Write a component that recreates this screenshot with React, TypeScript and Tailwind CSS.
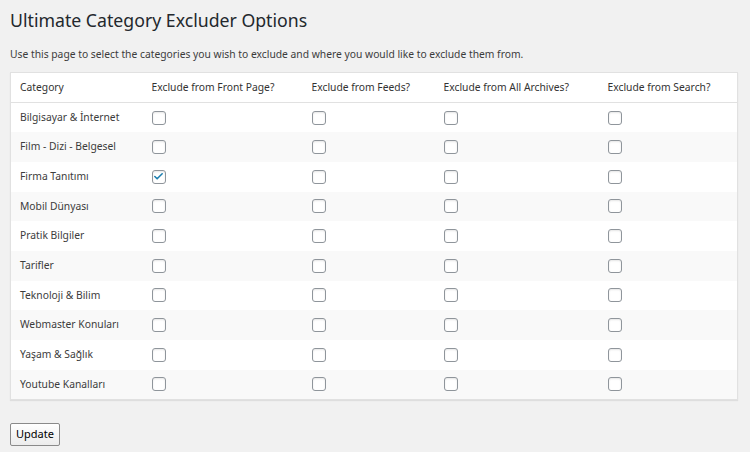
import { Check } from "lucide-react";

const categories = [
  { name: "Bilgisayar & İnternet", checked: [false, false, false, false] },
  { name: "Film - Dizi - Belgesel", checked: [false, false, false, false] },
  { name: "Firma Tanıtımı", checked: [true, false, false, false] },
  { name: "Mobil Dünyası", checked: [false, false, false, false] },
  { name: "Pratik Bilgiler", checked: [false, false, false, false] },
  { name: "Tarifler", checked: [false, false, false, false] },
  { name: "Teknoloji & Bilim", checked: [false, false, false, false] },
  { name: "Webmaster Konuları", checked: [false, false, false, false] },
  { name: "Yaşam & Sağlık", checked: [false, false, false, false] },
  { name: "Youtube Kanalları", checked: [false, false, false, false] },
];

const columns = [
  { label: "Category", w: "w-[132px]" },
  { label: "Exclude from Front Page?", w: "w-[160px]" },
  { label: "Exclude from Feeds?", w: "w-[132px]" },
  { label: "Exclude from All Archives?", w: "w-[164px]" },
  { label: "Exclude from Search?", w: "" },
];

function Box({ checked }: { checked: boolean }) {
  return (
    <span className="flex h-[14px] w-[14px] items-center justify-center rounded-[3px] border border-[#8f959b] bg-white shadow-[inset_0_1px_2px_rgba(0,0,0,0.1)]">
      {checked && <Check className="h-[11px] w-[11px] text-[#1d7fb0]" strokeWidth={3.5} />}
    </span>
  );
}

export default function App() {
  return (
    <div className="min-h-[452px] w-[750px] bg-[#f1f1f1] px-[10px] pt-[7px] font-['Noto_Sans',sans-serif] text-[#3c3c3c]">
      <h1 className="text-[17.7px] leading-[26px] text-[#23282d]">Ultimate Category Excluder Options</h1>
      <p className="mt-[13px] text-[10.3px] leading-[16px]">
        Use this page to select the categories you wish to exclude and where you would like to exclude them from.
      </p>

      <table className="mt-[10px] w-[728px] table-fixed border-collapse border border-[#e1e1e1] bg-white shadow-[0_1px_1px_rgba(0,0,0,0.08)]">
        <thead>
          <tr className="h-[30px] border-b border-[#e1e1e1]">
            {columns.map((c) => (
              <th key={c.label} className={`${c.w} px-[9px] text-left text-[10.3px] font-normal text-[#333]`}>
                {c.label}
              </th>
            ))}
          </tr>
        </thead>
        <tbody>
          {categories.map((cat, i) => (
            <tr key={cat.name} className={`h-[29.7px] ${i % 2 === 1 ? "bg-[#f9f9f9]" : "bg-white"}`}>
              <td className="px-[9px] text-[10.3px]">{cat.name}</td>
              {cat.checked.map((c, j) => (
                <td key={j} className="px-[9px]">
                  <Box checked={c} />
                </td>
              ))}
            </tr>
          ))}
        </tbody>
      </table>

      <button className="mt-[23px] h-[23px] rounded-[2px] border border-[#8a8a8a] bg-gradient-to-b from-white to-[#ececec] px-[5px] text-[11px] leading-[18px] text-black">
        Update
      </button>
    </div>
  );
}
